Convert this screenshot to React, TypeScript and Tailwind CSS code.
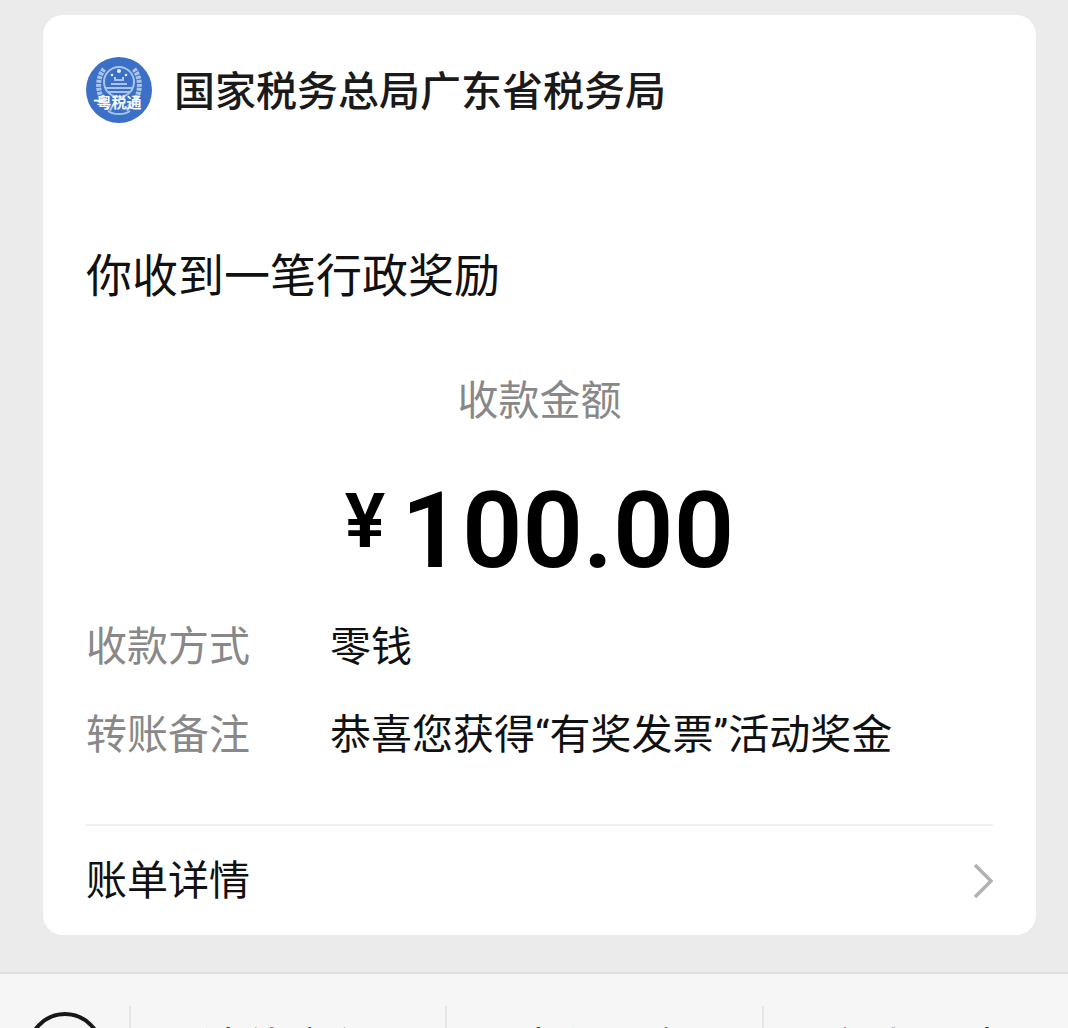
import React from "react";

interface Detail {
  label: string;
  value: string;
}

const details: Detail[] = [
  { label: "收款方式", value: "零钱" },
  { label: "转账备注", value: "恭喜您获得“有奖发票”活动奖金" },
];

const menus = ["法律文件", "支付服务", "行业动态"];

function Emblem() {
  return (
    <svg viewBox="0 0 66 66" className="size-[66px] shrink-0" role="img" aria-label="粤税通">
      <circle cx="33" cy="33" r="33" fill="#3b70c6" />
      <g fill="none" stroke="#a9c5ee" strokeWidth="2">
        <circle cx="33" cy="25" r="15" />
        <path d="M18 12C9 23 11 44 26 52M48 12c9 11 7 32-8 40" strokeWidth="5" strokeDasharray="3 1" />
        <path d="M20 31h26M22 35h22M25 27h16M28 23h10M22 54c6 4 16 4 22 0" />
      </g>
      <g fill="#e9f1ff">
        <circle cx="33" cy="14" r="2" />
        <circle cx="26" cy="18" r="1.3" />
        <circle cx="40" cy="18" r="1.3" />
        <circle cx="29" cy="21" r="1" />
        <circle cx="37" cy="21" r="1" />
      </g>
      <path d="M8 44c3-2 5 2 9-1" fill="none" stroke="#f4f8ff" strokeWidth="2" />
      <text x="33" y="51" textAnchor="middle" fontSize="15" fontWeight="700" fill="#f4f8ff">粤税通</text>
    </svg>
  );
}

export default function App() {
  return (
    <div className="flex h-screen flex-col overflow-hidden bg-[#ebebeb] font-['Roboto','Noto_Sans_CJK_SC',sans-serif] text-[41px] leading-[48px] text-[#111]">
      <main className="mx-8 mt-[15px] mb-[37px] ml-[43px] rounded-[20px] bg-white px-[43px]">
        <header className="flex items-center gap-[22px] pt-[42px]">
          <Emblem />
          <h1 className="pt-1 font-medium text-[#1a1a1a]">国家税务总局广东省税务局</h1>
        </header>

        <h2 className="mt-[129px] text-[46px]">你收到一笔行政奖励</h2>

        <section className="mt-[77px] text-center">
          <p className="text-[#888]">收款金额</p>
          <p className="mt-[46px] flex items-start justify-center gap-4 font-['Roboto'] font-semibold text-black">
            <span className="pt-2 text-[76px] leading-[84px]">¥</span>
            <span className="text-[106px] leading-[120px]">100.00</span>
          </p>
        </section>

        <dl className="mt-8 flex flex-col gap-10">
          {details.map((item) => (
            <div key={item.label} className="flex gap-20">
              <dt className="text-[#888]">{item.label}</dt>
              <dd>{item.value}</dd>
            </div>
          ))}
        </dl>

        <a href="#bill" className="mt-[65px] flex items-center justify-between border-t-2 border-[#f0f0f0] pt-[31px] pb-[30px]">
          账单详情
          <svg viewBox="0 0 20 36" className="h-9 w-5" fill="none" stroke="#b2b2b2" strokeWidth="3.5">
            <path d="M2 2l16 16L2 34" />
          </svg>
        </a>
      </main>

      <nav className="flex flex-1 items-start border-t-2 border-[#dedede] bg-[#f6f6f6] pt-8 text-[44px]">
        <button type="button" aria-label="键盘" className="flex w-[129px] justify-center pt-1.5">
          <svg viewBox="0 0 76 76" className="size-[76px]" fill="none" stroke="#181818" strokeWidth="4">
            <circle cx="38" cy="38" r="36" />
          </svg>
        </button>
        <div className="-mr-2.5 flex flex-1">
          {menus.map((menu) => (
            <button key={menu} type="button" className="flex-1 border-l-2 border-[#e6e6e6] py-5">
              {menu}
            </button>
          ))}
        </div>
      </nav>
    </div>
  );
}
